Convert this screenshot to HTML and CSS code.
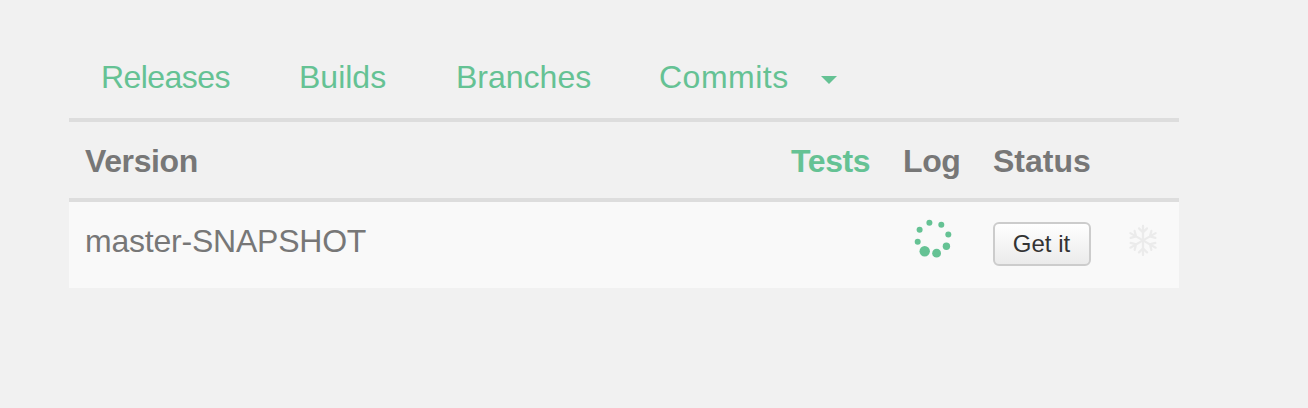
FILE: index.html
```html
<!DOCTYPE html>
<html lang="en">
<head>
<meta charset="utf-8">
<title>Builds</title>
<link rel="stylesheet" href="styles.css">
</head>
<body>
<main class="panel">
  <nav class="tabs">
    <a class="tab tight">Releases</a>
    <a class="tab">Builds</a>
    <a class="tab">Branches</a>
    <a class="tab loose">Commits</a>
    <svg class="caret" width="16" height="8" viewBox="0 0 16 8"><path d="M0 0h16L8 8z"/></svg>
  </nav>
  <div class="row head">
    <div class="cell">Version</div>
    <div class="cell tests">Tests</div>
    <div class="cell">Log</div>
    <div class="cell status">Status</div>
    <div class="cell"></div>
  </div>
  <div class="row body">
    <div class="cell name">master-SNAPSHOT</div>
    <div class="cell"></div>
    <div class="cell spin">
      <svg class="spinner" width="40" height="40" viewBox="913 219 40 40">
        <circle cx="929.4" cy="222.8" r="3"/>
        <circle cx="941.3" cy="224.7" r="3"/>
        <circle cx="948.3" cy="234.4" r="3"/>
        <circle cx="946.4" cy="246.2" r="3.7"/>
        <circle cx="936.6" cy="253.2" r="4.4"/>
        <circle cx="924.7" cy="251.3" r="5.2"/>
        <circle cx="917.7" cy="241.7" r="3"/>
        <circle cx="919.6" cy="229.8" r="3"/>
      </svg>
    </div>
    <div class="cell action"><button class="btn">Get it</button></div>
    <div class="cell frost">
      <svg class="flake" width="32" height="32" viewBox="-16 -16.4 32 32">
        <defs><path id="arm" d="M0 0V-14.6M-4 -12L0 -8L4 -12"/></defs>
        <use href="#arm"/>
        <use href="#arm" transform="rotate(60)"/>
        <use href="#arm" transform="rotate(120)"/>
        <use href="#arm" transform="rotate(180)"/>
        <use href="#arm" transform="rotate(240)"/>
        <use href="#arm" transform="rotate(300)"/>
      </svg>
    </div>
  </div>
</main>
</body>
</html>
```
FILE: styles.css
```css
body {
  margin: 0;
  background: #f1f1f1;
  color: #777;
  font: 32px/40px "Liberation Sans", Arial, sans-serif;
}
.panel { width: 1110px; margin-left: 69px; padding-top: 57px; }
.tabs {
  display: grid;
  grid-template-columns: 197px 157px 203px 163px 16px;
  height: 61px;
  padding-left: 32px;
  color: #65c294;
}
.tab { padding-left: 1px; }
.tight { padding-left: 0; letter-spacing: -0.55px; }
.loose { letter-spacing: 0.5px; }
.caret { margin-top: 19px; fill: #65c294; }
.row {
  display: grid;
  grid-template-columns: 706px 112px 90px 130px 72px;
  border-top: 4px solid #ddd;
}
.cell { padding: 19px 0 0 16px; white-space: nowrap; }
.head { height: 76px; font-weight: bold; letter-spacing: -0.4px; }
.status { letter-spacing: 0; }
.body { height: 86px; background: #f9f9f9; }
.name { letter-spacing: -0.22px; }
.tests { color: #65c294; }
.spin { padding-top: 17px; }
.spinner { display: block; margin-left: 10px; fill: #65c294; overflow: visible; }
.action { padding-top: 20px; }
.btn {
  display: block;
  box-sizing: border-box;
  width: 98px;
  height: 44px;
  padding: 0 1px 0 0;
  border: 2px solid #ccc;
  border-radius: 6px;
  background: linear-gradient(#fff, #ebebeb);
  color: #333;
  font: 24px/40px "Liberation Sans", Arial, sans-serif;
}
.frost { padding-top: 22px; }
.flake {
  display: block;
  margin-left: 4px;
  fill: none;
  stroke: #ebebeb;
  stroke-width: 2.2;
  stroke-linecap: round;
}
```
